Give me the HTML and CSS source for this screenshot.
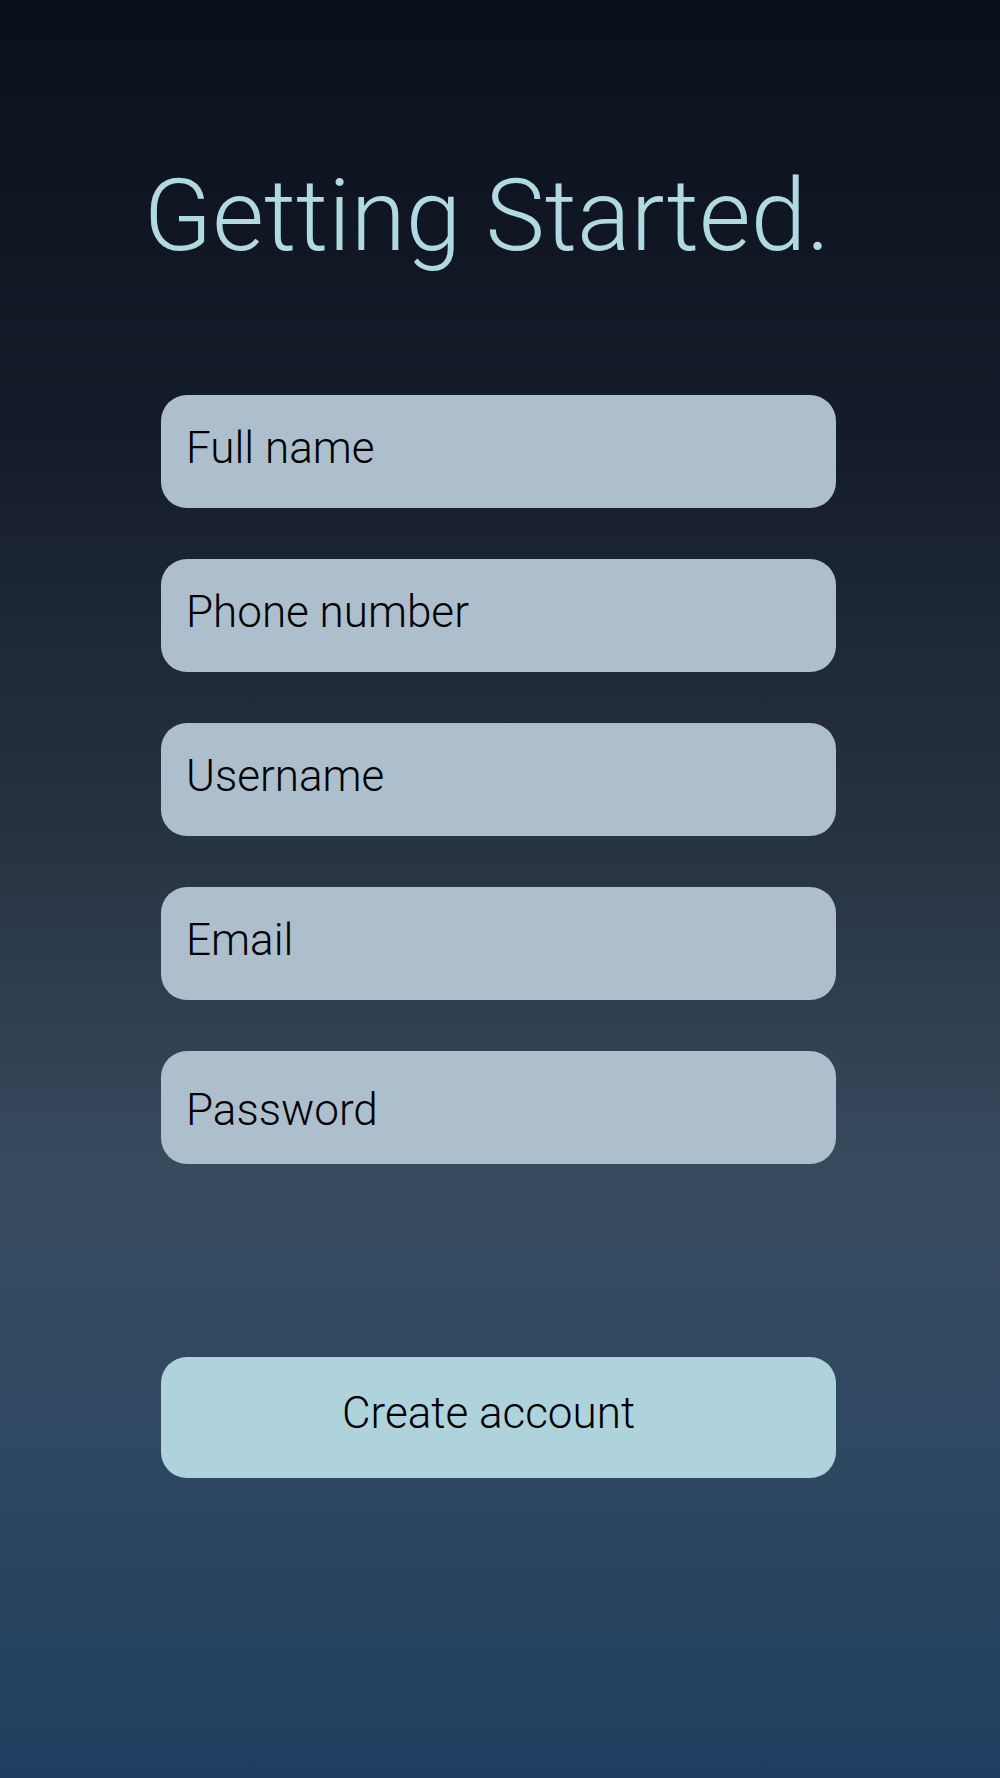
FILE: index.html
```html
<!DOCTYPE html>
<html lang="en">
<head>
  <meta charset="UTF-8">
  <meta name="viewport" content="width=device-width, initial-scale=1.0">
  <title>Getting Started</title>
  <link rel="stylesheet" href="styles.css">
</head>
<body>
  <div class="page">
    <h1 class="title">Getting Started.</h1>
    <form class="signup">
      <input class="field" type="text" placeholder="Full name">
      <input class="field" type="tel" placeholder="Phone number">
      <input class="field" type="text" placeholder="Username">
      <input class="field" type="email" placeholder="Email">
      <input class="field field-password" type="password" placeholder="Password">
      <button class="create-btn" type="button">Create account</button>
    </form>
  </div>
</body>
</html>
```

FILE: styles.css
```css
html, body {
  margin: 0;
  padding: 0;
}

body {
  min-height: 1778px;
  font-family: Roboto, "Liberation Sans", sans-serif;
  background: linear-gradient(to bottom,
    #0a101b 0%,
    #151d2a 25%,
    #2a3546 50%,
    #374b5f 66%,
    #2f4862 82%,
    #1f3e5f 100%);
}

.page {
  display: flex;
  flex-direction: column;
  align-items: center;
  padding-top: 166px;
}

.title {
  margin: 0;
  font-size: 100px;
  line-height: 100px;
  font-weight: 300;
  color: #b1d9e2;
  margin-right: 26px;
}

.signup {
  display: flex;
  flex-direction: column;
  gap: 51px;
  width: 675px;
  margin-top: 129px;
  margin-left: -3px;
}

.field {
  box-sizing: border-box;
  height: 113px;
  width: 100%;
  border: none;
  border-radius: 26px;
  background: #adbfcd;
  padding: 0 0 7px 25px;
  font-family: Roboto, "Liberation Sans", sans-serif;
  font-size: 44px;
  font-weight: 300;
  color: #000;
  outline: none;
}

.field-password {
  padding: 5px 0 0 25px;
}

.field::placeholder {
  color: #000;
  opacity: 1;
}

.create-btn {
  height: 121px;
  margin-top: 142px;
  border: none;
  border-radius: 26px;
  background: #aed3dd;
  font-family: Roboto, "Liberation Sans", sans-serif;
  font-size: 44px;
  font-weight: 300;
  color: #000;
  padding: 0 20px 9px 0;
  cursor: pointer;
}
```
